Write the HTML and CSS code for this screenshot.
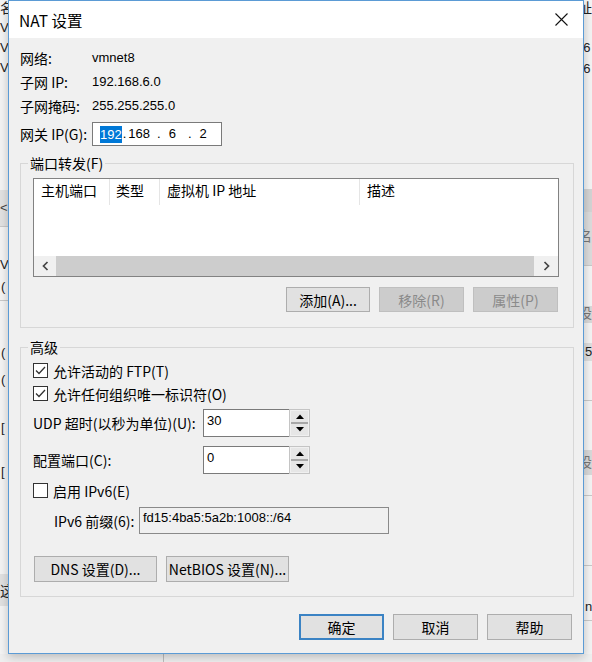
FILE: index.html
```html
<!DOCTYPE html>
<html lang="zh-CN">
<head>
<meta charset="utf-8">
<title>NAT 设置</title>
<link rel="stylesheet" href="styles.css">
</head>
<body>
<div class="desktop">
  <div class="bgwin">
    <span class="frag cjk fl-a">名</span>
    <span class="frag fl-v1">V</span>
    <span class="frag fl-v2">V</span>
    <span class="frag fl-v3">V</span>
    <span class="band bl-1"></span>
    <span class="frag fl-lt">&lt;</span>
    <span class="frag fl-v4">V</span>
    <span class="frag fl-p1">(</span>
    <span class="frag fl-p2">(</span>
    <span class="frag fl-p3">(</span>
    <span class="frag fl-b1">[</span>
    <span class="frag fl-b2">[</span>
    <span class="band bl-2"></span>
    <span class="frag cjk fl-zhe">这</span>
    <span class="line ll-1"></span>
    <span class="line ll-2"></span>

    <span class="frag cjk fr-zhi">址</span>
    <span class="frag fr-n1">16</span>
    <span class="frag fr-n2">16</span>
    <span class="band br-1"></span>
    <span class="band br-2"></span>
    <span class="frag cjk fr-ming">名</span>
    <span class="line lr-1"></span>
    <span class="band br-3"></span>
    <span class="frag cjk fr-she1">设</span>
    <span class="band br-4"></span>
    <span class="frag fr-five">5</span>
    <span class="line lr-2"></span>
    <span class="band br-5"></span>
    <span class="frag cjk fr-she2">设</span>
    <span class="line lr-3"></span>
    <span class="line lr-4"></span>
    <span class="frag fr-n">n</span>
    <span class="line lr-5"></span>
    <span class="bottom-strip"></span>
    <span class="bottom-vline"></span>
  </div>

  <div class="dialog">
    <div class="titlebar">
      <span class="title">NAT 设置</span>
      <span class="close">
        <svg width="13" height="13" viewBox="0 0 13 13"><path d="M0.5 0.5 L12.5 12.5 M12.5 0.5 L0.5 12.5" stroke="#111" stroke-width="1.1" fill="none"/></svg>
      </span>
    </div>

    <div class="dlg-body">
      <div class="info">
        <div class="row"><span class="lbl">网络:</span><span class="val">vmnet8</span></div>
        <div class="row"><span class="lbl">子网 IP:</span><span class="val">192.168.6.0</span></div>
        <div class="row"><span class="lbl">子网掩码:</span><span class="val">255.255.255.0</span></div>
        <div class="row gw">
          <span class="lbl">网关 IP(G):</span>
          <div class="ipbox">
            <span class="oct sel">192</span><span class="dot d1">.</span><span class="oct o2">168</span><span class="dot d2">.</span><span class="oct o3">6</span><span class="dot d3">.</span><span class="oct o4">2</span>
          </div>
        </div>
      </div>

      <fieldset class="group g1">
        <legend>端口转发(F)</legend>
        <div class="list">
          <div class="lhead">
            <span class="col c1">主机端口</span>
            <span class="col c2">类型</span>
            <span class="col c3">虚拟机 IP 地址</span>
            <span class="col c4">描述</span>
          </div>
          <div class="lbody"></div>
          <div class="hscroll">
            <span class="sarrow left">
              <svg width="7" height="10" viewBox="0 0 7 10"><path d="M5.5 1 L1.5 5 L5.5 9" stroke="#444" stroke-width="1.7" fill="none"/></svg>
            </span>
            <span class="thumb"></span>
            <span class="sarrow right">
              <svg width="7" height="10" viewBox="0 0 7 10"><path d="M1.5 1 L5.5 5 L1.5 9" stroke="#444" stroke-width="1.7" fill="none"/></svg>
            </span>
          </div>
        </div>
        <div class="btnrow">
          <button class="btn w84">添加(A)...</button>
          <button class="btn w85" disabled>移除(R)</button>
          <button class="btn w85" disabled>属性(P)</button>
        </div>
      </fieldset>

      <fieldset class="group g2">
        <legend>高级</legend>
        <div class="cbrow">
          <span class="cb"><svg width="13" height="13" viewBox="0 0 13 13"><path d="M2 6.5 L5 9.5 L11 3" stroke="#333" stroke-width="1.3" fill="none"/></svg></span>
          <span>允许活动的 FTP(T)</span>
        </div>
        <div class="cbrow">
          <span class="cb"><svg width="13" height="13" viewBox="0 0 13 13"><path d="M2 6.5 L5 9.5 L11 3" stroke="#333" stroke-width="1.3" fill="none"/></svg></span>
          <span>允许任何组织唯一标识符(O)</span>
        </div>
        <div class="spinrow first">
          <span class="slbl">UDP 超时(以秒为单位)(U):</span>
          <div class="spin">
            <div class="spin-input">30</div>
            <div class="spin-btns">
              <span class="sb up"><svg width="8" height="5" viewBox="0 0 8 5"><polygon points="0,5 4,0.5 8,5" fill="#000"/></svg></span>
              <span class="sb down"><svg width="8" height="5" viewBox="0 0 8 5"><polygon points="0,0 8,0 4,4.5" fill="#000"/></svg></span>
            </div>
          </div>
        </div>
        <div class="spinrow second">
          <span class="slbl">配置端口(C):</span>
          <div class="spin">
            <div class="spin-input">0</div>
            <div class="spin-btns">
              <span class="sb up"><svg width="8" height="5" viewBox="0 0 8 5"><polygon points="0,5 4,0.5 8,5" fill="#000"/></svg></span>
              <span class="sb down"><svg width="8" height="5" viewBox="0 0 8 5"><polygon points="0,0 8,0 4,4.5" fill="#000"/></svg></span>
            </div>
          </div>
        </div>
        <div class="cbrow ipv6">
          <span class="cb"></span>
          <span>启用 IPv6(E)</span>
        </div>
        <div class="prefixrow">
          <span class="plbl">IPv6 前缀(6):</span>
          <div class="prefix">fd15:4ba5:5a2b:1008::/64</div>
        </div>
        <div class="netbtns">
          <button class="btn w123">DNS 设置(D)...</button>
          <button class="btn w123">NetBIOS 设置(N)...</button>
        </div>
      </fieldset>

      <div class="footer">
        <button class="btn w85 default">确定</button>
        <button class="btn w85">取消</button>
        <button class="btn w85">帮助</button>
      </div>
    </div>
  </div>
</div>
</body>
</html>
```

FILE: styles.css
```css
* { box-sizing: border-box; }
html, body { margin: 0; padding: 0; }
body {
  width: 592px;
  height: 662px;
  overflow: hidden;
  font-family: "Noto Sans CJK SC", sans-serif;
  font-size: 14px;
  color: #000;
  background: #f2f2f2;
}
.desktop {
  position: relative;
  width: 592px;
  height: 662px;
  overflow: hidden;
}

/* background window (under the dialog) */
.bgwin {
  position: absolute;
  inset: 0;
  background: #f4f4f4;
  font-family: "Liberation Sans", "Noto Sans CJK SC", sans-serif;
  font-size: 13px;
  color: #222;
}
.frag { position: absolute; line-height: 14px; white-space: nowrap; }
.frag.cjk { font-family: "Noto Sans CJK SC", sans-serif; font-size: 14px; }
.band { position: absolute; background: #dadada; }
.line { position: absolute; height: 1px; background: #c9c9c9; }

.fl-a { left: 0; top: 0; }
.fl-v1 { left: 0; top: 21px; }
.fl-v2 { left: 0; top: 41px; }
.fl-v3 { left: 0; top: 61px; }
.bl-1 { left: 0; top: 190px; width: 8px; height: 36px; background: #e2e2e2; }
.fl-lt { left: 0; top: 201px; color: #444; }
.fl-v4 { left: 0; top: 258px; }
.fl-p1 { left: 1px; top: 280px; }
.fl-p2 { left: 1px; top: 346px; }
.fl-p3 { left: 1px; top: 373px; }
.fl-b1 { left: 1px; top: 421px; }
.fl-b2 { left: 1px; top: 465px; }
.bl-2 { left: 0; top: 574px; width: 8px; height: 32px; background: #e1e1e1; }
.fl-zhe { left: 0; top: 583px; }
.ll-1 { left: 0; top: 226px; width: 8px; }
.ll-2 { left: 0; top: 300px; width: 8px; }

.fr-zhi { left: 578px; top: 0; }
.fr-n1 { left: 576px; top: 41px; }
.fr-n2 { left: 576px; top: 62px; }
.br-1 { left: 584px; top: 189px; width: 8px; height: 23px; background: #d4d4d4; }
.br-2 { left: 584px; top: 212px; width: 8px; height: 53px; background: #dcdcdc; }
.fr-ming { left: 578px; top: 228px; color: #777; }
.lr-1 { left: 584px; top: 265px; width: 8px; }
.br-3 { left: 584px; top: 306px; width: 8px; height: 17px; background: #d9d9d9; }
.fr-she1 { left: 578px; top: 305px; color: #777; }
.br-4 { left: 584px; top: 343px; width: 8px; height: 18px; background: #dedede; }
.fr-five { left: 585px; top: 345px; }
.lr-2 { left: 584px; top: 400px; width: 8px; }
.br-5 { left: 584px; top: 450px; width: 8px; height: 25px; background: #d9d9d9; }
.fr-she2 { left: 578px; top: 454px; color: #777; }
.lr-3 { left: 584px; top: 495px; width: 8px; }
.lr-4 { left: 584px; top: 565px; width: 8px; }
.fr-n { left: 585px; top: 600px; }
.lr-5 { left: 584px; top: 620px; width: 8px; }
.bottom-strip { position: absolute; left: 0; top: 654px; width: 592px; height: 8px; background: #efefef; }
.bottom-vline { position: absolute; left: 163px; top: 654px; width: 1px; height: 8px; background: #bdbdbd; }

/* dialog */
.dialog {
  position: absolute;
  left: 8px;
  top: 0;
  width: 576px;
  height: 654px;
  border: 1px solid #5b9bd5;
  background: #f0f0f0;
  box-shadow: 0 3px 9px rgba(0, 0, 0, 0.22);
  display: flex;
  flex-direction: column;
}
.titlebar {
  height: 37px;
  background: #fff;
  display: flex;
  align-items: center;
  padding-left: 10px;
  flex: none;
}
.title { font-size: 15.5px; line-height: 20px; }
.close {
  margin-left: auto;
  width: 43px;
  height: 37px;
  display: flex;
  align-items: center;
  justify-content: center;
}
.close svg { display: block; }

.dlg-body {
  padding: 8px 9px 0 11px;
  display: flex;
  flex-direction: column;
}

.info { display: flex; flex-direction: column; }
.row { height: 24px; display: flex; align-items: center; }
.lbl { width: 72px; line-height: 18px; white-space: nowrap; }
.val { font-family: "Liberation Sans", sans-serif; font-size: 13px; line-height: 16px; }
.row.gw { margin-top: 4px; }
.ipbox {
  width: 130px;
  height: 24px;
  border: 1px solid #7a7a7a;
  background: #fff;
  display: flex;
  align-items: center;
  padding-left: 7px;
  font-family: "Liberation Sans", sans-serif;
  font-size: 13px;
  line-height: 16px;
}
.oct, .dot { display: inline-block; }
.sel { background: #0078d7; color: #fff; line-height: 17px; }
.d1 { margin-left: 1px; }
.o2 { margin-left: 2px; }
.d2 { margin-left: 7px; }
.o3 { margin-left: 8px; }
.d3 { margin-left: 12px; }
.o4 { margin-left: 8px; }

/* group boxes */
.group {
  margin: 8px 0 0 0;
  border: 1px solid #d7d7d7;
  width: 554px;
  min-width: 0;
}
.group legend {
  font-size: 14px;
  line-height: 18px;
  padding: 0 2px;
  margin-left: -5px;
}
.g1 { padding: 6px 14px 15px 12px; }
.g2 { margin-top: 10px; padding: 3px 14px 14px 12px; }

.list {
  width: 526px;
  height: 99px;
  border: 1px solid #828282;
  background: #fff;
  display: flex;
  flex-direction: column;
}
.lhead { height: 26px; display: flex; flex: none; }
.col {
  line-height: 22px;
  border-right: 1px solid #e5e5e5;
  white-space: nowrap;
}
.c1 { width: 76px; padding-left: 7px; }
.c2 { width: 50px; padding-left: 6px; }
.c3 { width: 200px; padding-left: 7px; }
.c4 { flex: 1; padding-left: 7px; border-right: none; }
.lbody { flex: 1; }
.hscroll { height: 20px; display: flex; flex: none; background: #f0f0f0; }
.sarrow { display: flex; align-items: center; justify-content: center; }
.sarrow.left { width: 22px; }
.sarrow.right { width: 24px; }
.thumb { flex: 1; background: #cdcdcd; }

.btnrow {
  margin-top: 10px;
  display: flex;
  justify-content: flex-end;
  gap: 9px;
  padding-right: 1px;
}

.btn {
  font-family: "Noto Sans CJK SC", sans-serif;
  font-size: 14px;
  line-height: 18px;
  color: #000;
  background: #e1e1e1;
  border: 1px solid #adadad;
  padding: 0;
  margin: 0;
  height: 25px;
  white-space: nowrap;
}
.btn:disabled { background: #cccccc; border-color: #bfbfbf; color: #8a8a8a; }
.w84 { width: 84px; }
.w85 { width: 85px; }
.w123 { width: 123px; height: 26px; }

.cbrow { height: 23px; display: flex; align-items: center; line-height: 18px; }
.cb {
  width: 15px;
  height: 15px;
  border: 1px solid #333;
  background: #fff;
  margin-right: 5px;
  display: flex;
  align-items: center;
  justify-content: center;
  flex: none;
}
.cb svg { display: block; }
.cbrow.ipv6 { margin-top: 5px; }

.spinrow { height: 28px; display: flex; align-items: center; }
.spinrow.first { margin-top: 4px; }
.spinrow.second { margin-top: 9px; }
.slbl { width: 170px; line-height: 18px; white-space: nowrap; }
.spin { display: flex; height: 28px; }
.spin-input {
  width: 86px;
  height: 28px;
  border: 1px solid #7a7a7a;
  border-right: none;
  background: #fff;
  padding: 3px 0 0 3px;
  font-family: "Liberation Sans", sans-serif;
  font-size: 13px;
  line-height: 16px;
}
.spin-btns {
  width: 21px;
  height: 28px;
  border: 1px solid #c4c4c4;
  background: #f0f0f0;
  padding: 1px;
  display: flex;
  flex-direction: column;
}
.sb {
  flex: 1;
  background: #e6e6e6;
  display: flex;
  align-items: center;
  justify-content: center;
}
.sb.up { border-bottom: 2px solid #a8a8a8; }
.sb svg { display: block; }

.prefixrow { margin-top: 5px; height: 27px; display: flex; align-items: center; padding-left: 21px; }
.plbl { width: 85px; line-height: 18px; white-space: nowrap; }
.prefix {
  width: 250px;
  height: 27px;
  border: 1px solid #8a8a8a;
  background: #f0f0f0;
  padding: 2px 0 0 3px;
  font-family: "Liberation Sans", sans-serif;
  font-size: 13px;
  line-height: 16px;
}

.netbtns { margin-top: 22px; display: flex; gap: 9px; padding-left: 1px; }

.footer {
  margin-top: 17px;
  display: flex;
  justify-content: flex-end;
  gap: 9px;
  padding-right: 2px;
}
.footer .btn { height: 26px; }
.btn.default { border: 2px solid #3b83c4; }
```
